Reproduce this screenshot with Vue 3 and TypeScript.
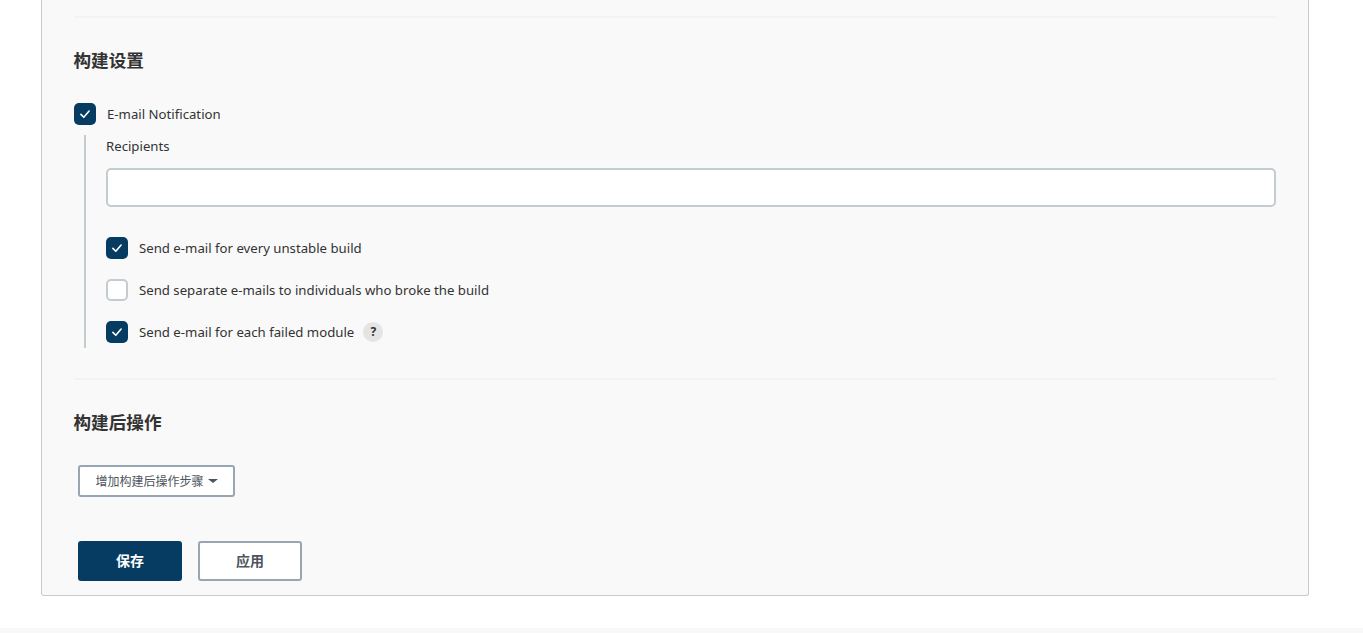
<script setup lang="ts">
const options = [
  { label: 'Send e-mail for every unstable build', checked: true, help: false },
  { label: 'Send separate e-mails to individuals who broke the build', checked: false, help: false },
  { label: 'Send e-mail for each failed module', checked: true, help: true },
]
</script>

<template>
  <div class="page">
    <main class="card">
      <hr class="rule first" />
      <h2 class="head">构建设置</h2>

      <label class="check top">
        <span class="box on">
          <svg viewBox="0 0 22 22" width="22" height="22"><path d="M6.9 11.4l2.9 2.9 5.3-6.2" /></svg>
        </span>
        <span>E-mail Notification</span>
      </label>

      <div class="nested">
        <div class="field-label">Recipients</div>
        <input class="text" type="text" />
        <label v-for="o in options" :key="o.label" class="check row">
          <span class="box" :class="{ on: o.checked }">
            <svg v-if="o.checked" viewBox="0 0 22 22" width="22" height="22"><path d="M6.9 11.4l2.9 2.9 5.3-6.2" /></svg>
          </span>
          <span>{{ o.label }}</span>
          <span v-if="o.help" class="help">?</span>
        </label>
      </div>

      <hr class="rule second" />
      <h2 class="head post">构建后操作</h2>

      <button class="add" type="button">增加构建后操作步骤<i class="caret"></i></button>

      <div class="actions">
        <button class="btn save" type="button">保存</button>
        <button class="btn apply" type="button">应用</button>
      </div>
    </main>
    <footer class="foot"></footer>
  </div>
</template>

<style>
html, body { margin: 0; background: #fff; overflow: hidden; }
</style>

<style scoped>
.page {
  height: 633px;
  overflow: hidden;
  position: relative;
  font-family: "Noto Sans", "Noto Sans CJK SC", sans-serif;
  font-size: 13.2px;
  color: #333;
}
.card {
  box-sizing: border-box;
  width: 1268px;
  height: 596px;
  margin-left: 41px;
  padding: 16px 32px 0;
  background: #f9f9f9;
  border: 1px solid #c3ccd1;
  border-top: 0;
  border-radius: 0 0 3px 3px;
}
.rule { height: 2px; margin: 0; border: 0; background: #f3f3f3; }
.head {
  margin: 0 0 0 -0.5px;
  font-size: 17.6px;
  line-height: 24px;
  font-weight: 700;
  color: #333;
}
.rule.first + .head { margin-top: 30px; }
.check { display: flex; align-items: center; line-height: 22px; }
.check.top { margin-top: 31px; }
.box {
  box-sizing: border-box;
  flex: none;
  width: 22px;
  height: 22px;
  margin-right: 11px;
  border-radius: 5px;
  background: #fff;
  border: 2px solid #c3ccd1;
}
.box.on { background: #063c61; border: 0; }
.box svg { display: block; }
.box path { fill: none; stroke: #fff; stroke-width: 1.6; stroke-linecap: round; stroke-linejoin: round; }
.nested {
  margin: 10px 0 0 10px;
  padding-left: 20px;
  height: 213px;
  border-left: 2px solid #c3ccd1;
}
.field-label { line-height: 22px; }
.text {
  display: block;
  box-sizing: border-box;
  width: 100%;
  height: 39px;
  margin: 11px 0 30px;
  background: #fff;
  border: 2px solid #c3ccd1;
  border-radius: 5px;
  outline: 0;
}
.check.row { margin-bottom: 20px; }
.help {
  width: 20px;
  height: 20px;
  margin-left: 9px;
  border-radius: 50%;
  background: #e4e4e4;
  font-size: 12px;
  font-weight: 700;
  line-height: 20px;
  text-align: center;
}
.rule.second { margin-top: 30px; }
.head.post { margin-top: 30px; }
.add {
  display: flex;
  align-items: center;
  justify-content: center;
  box-sizing: border-box;
  width: 157px;
  height: 32px;
  margin: 31px 0 0 4px;
  padding: 0;
  background: #fff;
  border: 2px solid #98a6b3;
  border-radius: 3px;
  font: inherit;
  font-size: 12px;
  color: #4d545d;
}
.caret {
  margin-left: 4px;
  border-left: 5px solid transparent;
  border-right: 5px solid transparent;
  border-top: 4px solid #4d545d;
}
.actions { display: flex; gap: 16px; margin: 44px 0 0 4px; }
.btn {
  box-sizing: border-box;
  width: 104px;
  height: 40px;
  padding: 0 0 2px;
  border-radius: 3px;
  font: inherit;
  font-size: 14px;
  font-weight: 700;
}
.save { background: #063c61; border: 0; color: #fff; }
.apply { background: #fff; border: 2px solid #98a6b3; color: #4d545d; }
.foot {
  position: absolute;
  left: 0;
  right: 0;
  bottom: 0;
  height: 5px;
  background: #f8f8f8;
}
</style>
